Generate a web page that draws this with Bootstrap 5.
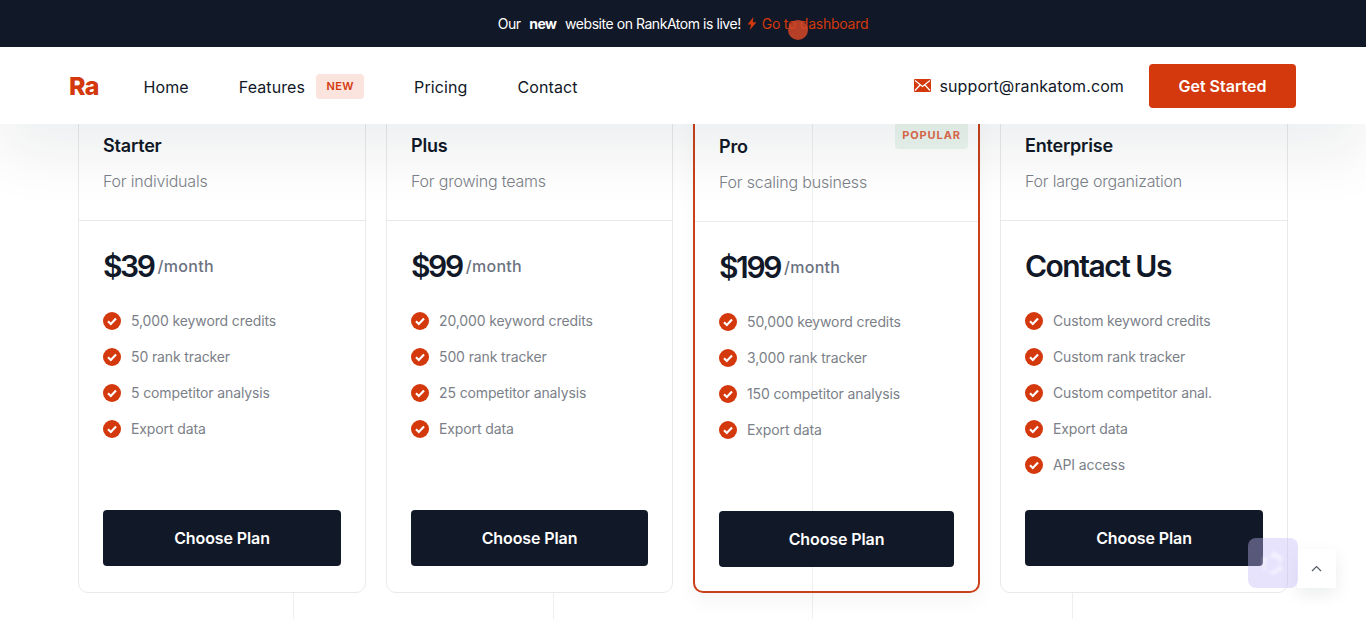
<!DOCTYPE html>
<html lang="en">
<head>
<meta charset="utf-8">
<title>RankAtom Pricing</title>
<link href="https://cdn.jsdelivr.net/npm/bootstrap@5.3.0/dist/css/bootstrap.min.css" rel="stylesheet">
<style>
html,body{height:619px;overflow:hidden;}
body{font-family:"Inter","Noto Sans",sans-serif;background:#fff;color:#111827;position:relative;}
.promo-bar{height:47px;background:#111827;color:#fff;font-size:14px;letter-spacing:-.45px;position:relative;z-index:5;padding-bottom:1px;}
.promo-bar b{font-weight:700;margin:0 5px;}
.promo-link{color:#d4380d;text-decoration:none;margin-left:6px;letter-spacing:-.25px;gap:5px;}
.promo-dot{position:absolute;left:788px;top:20px;width:20px;height:20px;border-radius:50%;background:rgba(212,72,40,.85);}
.site-nav{height:77px;background:#fff;box-shadow:0 30px 60px rgba(17,24,39,.075);position:relative;z-index:4;padding:0 70px 0 69px;}
.brand-mark{font-size:25px;font-weight:800;color:#d4380d;letter-spacing:-.8px;margin-right:45px;text-decoration:none;line-height:1;padding-top:2px;}
.site-nav .navbar-nav .nav-link{color:#111827;font-size:16px;font-weight:400;padding:2px 0 0;letter-spacing:.1px;}
.nav-gap{gap:50px;}
.tag-new{background:#fbe4de;color:#d4380d;font-size:11px;font-weight:600;border-radius:4px;width:48px;height:25px;letter-spacing:.4px;margin:2px 0 0 11px;}
.mail-link{color:#111827;font-size:16px;font-weight:400;text-decoration:none;margin-right:25px;letter-spacing:.11px;}
.start-btn{background:#d4380d;color:#fff;width:147px;height:44px;font-size:16px;font-weight:600;border-radius:4px;letter-spacing:0;padding:0;}
.start-btn:hover{background:#d4380d;color:#fff;}
.price-grid{display:grid;grid-template-columns:288px 287px 287px 288px;gap:20px;margin:-29px 78px 0;position:relative;z-index:2;height:498px;}
.grid-lines{position:absolute;inset:124px 0 0 0;z-index:1;}
.grid-lines i{position:absolute;top:0;bottom:0;width:1px;background:#eeeff1;}
.plan-card{border:1px solid #e8e9eb;border-radius:10px;background:#fff;display:flex;flex-direction:column;}
.plan-hot{border:2px solid #c9401a;background:transparent;box-shadow:0 10px 20px rgba(17,24,39,.04);position:relative;}
.plan-head{height:125px;padding:37px 24px 0;border-bottom:1px solid #e8e9eb;}
.plan-name{font-size:18px;font-weight:600;line-height:26px;margin:0 0 9px;letter-spacing:-.2px;}
.plan-sub{font-size:16px;font-weight:300;color:#7b7f88;line-height:26px;margin:0;letter-spacing:-.2px;}
.plan-body{padding:0 24px 26px;flex:1;display:flex;flex-direction:column;}
.plan-hot .plan-body{padding-bottom:24px;}
.plan-price{height:86px;display:flex;align-items:center;gap:4px;padding-top:5px;}
.plan-amt{font-size:30px;font-weight:600;letter-spacing:-2.4px;}
.plan-word{letter-spacing:-1.5px;}
.plan-per{font-size:16px;font-weight:500;color:#6b7280;letter-spacing:.3px;padding-bottom:2px;}
.feat-list{list-style:none;padding:0;margin:0;flex:1;display:flex;flex-direction:column;gap:12px;padding-top:1px;}
.feat-list li{display:flex;align-items:center;gap:10px;height:24px;font-size:14px;color:#7b7f88;font-weight:400;letter-spacing:-.12px;}
.feat-list svg{flex:none;margin-top:2px;}
.plan-cta{background:#111827;color:#fff;height:56px;font-size:16px;font-weight:600;border-radius:4px;width:100%;letter-spacing:-.1px;}
.plan-cta:hover{background:#111827;color:#fff;}
.tag-pop{position:absolute;top:25px;right:10px;width:73px;height:27px;background:#ecf6f0;color:#e0694a;font-size:11px;font-weight:700;letter-spacing:.9px;border-radius:4px;}
.float-tool{position:absolute;left:1248px;top:538px;width:50px;height:50px;border-radius:8px;background:rgba(196,186,250,.4);z-index:6;}
.float-tool svg{filter:blur(1.5px);}
.to-top{position:absolute;left:1297px;top:549px;width:39px;height:39px;background:#fff;box-shadow:0 6px 18px rgba(17,24,39,.08);z-index:5;}
</style>
</head>
<body>
<div class="grid-lines"><i style="left:293px"></i><i style="left:553px"></i><i style="left:812px"></i><i style="left:1072px"></i></div>

<div class="promo-bar d-flex align-items-center justify-content-center">
  <span>Our <b>new</b> website on RankAtom is live!</span>
  <a class="promo-link d-inline-flex align-items-center" href="#">
    <svg width="10" height="13" viewBox="0 0 10 13" aria-hidden="true"><path d="M6.4 0 0.6 7.4h3.4L2.9 13 9.4 5.3H5.8z" fill="#d4380d"/></svg>
    Go to dashboard</a>
  <span class="promo-dot"></span>
</div>

<nav class="site-nav navbar navbar-expand d-flex align-items-center justify-content-between">
  <div class="d-flex align-items-center">
    <a class="brand-mark" href="#">Ra</a>
    <ul class="navbar-nav nav-gap align-items-center">
      <li class="nav-item"><a class="nav-link" href="#">Home</a></li>
      <li class="nav-item d-flex align-items-center"><a class="nav-link" href="#">Features</a><span class="tag-new d-flex align-items-center justify-content-center">NEW</span></li>
      <li class="nav-item"><a class="nav-link" href="#">Pricing</a></li>
      <li class="nav-item"><a class="nav-link" href="#">Contact</a></li>
    </ul>
  </div>
  <div class="d-flex align-items-center">
    <a class="mail-link d-flex align-items-center gap-2" href="#">
      <svg width="17" height="13" viewBox="0 0 17 13" aria-hidden="true"><rect width="17" height="13" rx="1" fill="#d4380d"/><path d="M1 1.5 8.5 7.5 16 1.5M1 11.5 6 6M16 11.5 11 6" fill="none" stroke="#fff" stroke-width="1.2"/></svg>
      support@rankatom.com</a>
    <a class="btn start-btn d-flex align-items-center justify-content-center" href="#">Get Started</a>
  </div>
</nav>

<main class="price-grid">
  <section class="plan-card">
    <div class="plan-head"><h3 class="plan-name">Starter</h3><p class="plan-sub">For individuals</p></div>
    <div class="plan-body">
      <div class="plan-price"><span class="plan-amt">$39</span><span class="plan-per">/month</span></div>
      <ul class="feat-list">
        <li><svg width="18" height="18" viewBox="0 0 18 18"><circle cx="9" cy="9" r="9" fill="#d4380d"/><path d="M5 9.3 7.8 12 13 6.6" fill="none" stroke="#fff" stroke-width="2.2"/></svg>5,000 keyword credits</li>
        <li><svg width="18" height="18" viewBox="0 0 18 18"><circle cx="9" cy="9" r="9" fill="#d4380d"/><path d="M5 9.3 7.8 12 13 6.6" fill="none" stroke="#fff" stroke-width="2.2"/></svg>50 rank tracker</li>
        <li><svg width="18" height="18" viewBox="0 0 18 18"><circle cx="9" cy="9" r="9" fill="#d4380d"/><path d="M5 9.3 7.8 12 13 6.6" fill="none" stroke="#fff" stroke-width="2.2"/></svg>5 competitor analysis</li>
        <li><svg width="18" height="18" viewBox="0 0 18 18"><circle cx="9" cy="9" r="9" fill="#d4380d"/><path d="M5 9.3 7.8 12 13 6.6" fill="none" stroke="#fff" stroke-width="2.2"/></svg>Export data</li>
      </ul>
      <a class="btn plan-cta d-flex align-items-center justify-content-center" href="#">Choose Plan</a>
    </div>
  </section>
  <section class="plan-card">
    <div class="plan-head"><h3 class="plan-name">Plus</h3><p class="plan-sub">For growing teams</p></div>
    <div class="plan-body">
      <div class="plan-price"><span class="plan-amt">$99</span><span class="plan-per">/month</span></div>
      <ul class="feat-list">
        <li><svg width="18" height="18" viewBox="0 0 18 18"><circle cx="9" cy="9" r="9" fill="#d4380d"/><path d="M5 9.3 7.8 12 13 6.6" fill="none" stroke="#fff" stroke-width="2.2"/></svg>20,000 keyword credits</li>
        <li><svg width="18" height="18" viewBox="0 0 18 18"><circle cx="9" cy="9" r="9" fill="#d4380d"/><path d="M5 9.3 7.8 12 13 6.6" fill="none" stroke="#fff" stroke-width="2.2"/></svg>500 rank tracker</li>
        <li><svg width="18" height="18" viewBox="0 0 18 18"><circle cx="9" cy="9" r="9" fill="#d4380d"/><path d="M5 9.3 7.8 12 13 6.6" fill="none" stroke="#fff" stroke-width="2.2"/></svg>25 competitor analysis</li>
        <li><svg width="18" height="18" viewBox="0 0 18 18"><circle cx="9" cy="9" r="9" fill="#d4380d"/><path d="M5 9.3 7.8 12 13 6.6" fill="none" stroke="#fff" stroke-width="2.2"/></svg>Export data</li>
      </ul>
      <a class="btn plan-cta d-flex align-items-center justify-content-center" href="#">Choose Plan</a>
    </div>
  </section>
  <section class="plan-card plan-hot">
    <span class="tag-pop d-flex align-items-center justify-content-center">POPULAR</span>
    <div class="plan-head"><h3 class="plan-name">Pro</h3><p class="plan-sub">For scaling business</p></div>
    <div class="plan-body">
      <div class="plan-price"><span class="plan-amt">$199</span><span class="plan-per">/month</span></div>
      <ul class="feat-list">
        <li><svg width="18" height="18" viewBox="0 0 18 18"><circle cx="9" cy="9" r="9" fill="#d4380d"/><path d="M5 9.3 7.8 12 13 6.6" fill="none" stroke="#fff" stroke-width="2.2"/></svg>50,000 keyword credits</li>
        <li><svg width="18" height="18" viewBox="0 0 18 18"><circle cx="9" cy="9" r="9" fill="#d4380d"/><path d="M5 9.3 7.8 12 13 6.6" fill="none" stroke="#fff" stroke-width="2.2"/></svg>3,000 rank tracker</li>
        <li><svg width="18" height="18" viewBox="0 0 18 18"><circle cx="9" cy="9" r="9" fill="#d4380d"/><path d="M5 9.3 7.8 12 13 6.6" fill="none" stroke="#fff" stroke-width="2.2"/></svg>150 competitor analysis</li>
        <li><svg width="18" height="18" viewBox="0 0 18 18"><circle cx="9" cy="9" r="9" fill="#d4380d"/><path d="M5 9.3 7.8 12 13 6.6" fill="none" stroke="#fff" stroke-width="2.2"/></svg>Export data</li>
      </ul>
      <a class="btn plan-cta d-flex align-items-center justify-content-center" href="#">Choose Plan</a>
    </div>
  </section>
  <section class="plan-card">
    <div class="plan-head"><h3 class="plan-name">Enterprise</h3><p class="plan-sub">For large organization</p></div>
    <div class="plan-body">
      <div class="plan-price"><span class="plan-amt plan-word">Contact Us</span></div>
      <ul class="feat-list">
        <li><svg width="18" height="18" viewBox="0 0 18 18"><circle cx="9" cy="9" r="9" fill="#d4380d"/><path d="M5 9.3 7.8 12 13 6.6" fill="none" stroke="#fff" stroke-width="2.2"/></svg>Custom keyword credits</li>
        <li><svg width="18" height="18" viewBox="0 0 18 18"><circle cx="9" cy="9" r="9" fill="#d4380d"/><path d="M5 9.3 7.8 12 13 6.6" fill="none" stroke="#fff" stroke-width="2.2"/></svg>Custom rank tracker</li>
        <li><svg width="18" height="18" viewBox="0 0 18 18"><circle cx="9" cy="9" r="9" fill="#d4380d"/><path d="M5 9.3 7.8 12 13 6.6" fill="none" stroke="#fff" stroke-width="2.2"/></svg>Custom competitor anal.</li>
        <li><svg width="18" height="18" viewBox="0 0 18 18"><circle cx="9" cy="9" r="9" fill="#d4380d"/><path d="M5 9.3 7.8 12 13 6.6" fill="none" stroke="#fff" stroke-width="2.2"/></svg>Export data</li>
        <li><svg width="18" height="18" viewBox="0 0 18 18"><circle cx="9" cy="9" r="9" fill="#d4380d"/><path d="M5 9.3 7.8 12 13 6.6" fill="none" stroke="#fff" stroke-width="2.2"/></svg>API access</li>
      </ul>
      <a class="btn plan-cta d-flex align-items-center justify-content-center" href="#">Choose Plan</a>
    </div>
  </section>
</main>

<div class="float-tool d-flex align-items-center justify-content-center">
  <svg width="32" height="32" viewBox="0 0 32 32" aria-hidden="true"><path d="M16 4 26 10 23 17C22 12 17 9.500 12 11ZM26 22 16 28 10 24C15 25 20 23 23 17ZM6 22 6 10 12 11C8 14 7 20 10 24Z" fill="#fff" fill-opacity=".5"/></svg>
</div>
<a class="to-top d-flex align-items-center justify-content-center" href="#" aria-label="Back to top">
  <svg width="11" height="7" viewBox="0 0 11 7" aria-hidden="true"><path d="M1 6 5.500 1.500 10 6" fill="none" stroke="#555b66" stroke-width="1.200"/></svg>
</a>
</body>
</html>
